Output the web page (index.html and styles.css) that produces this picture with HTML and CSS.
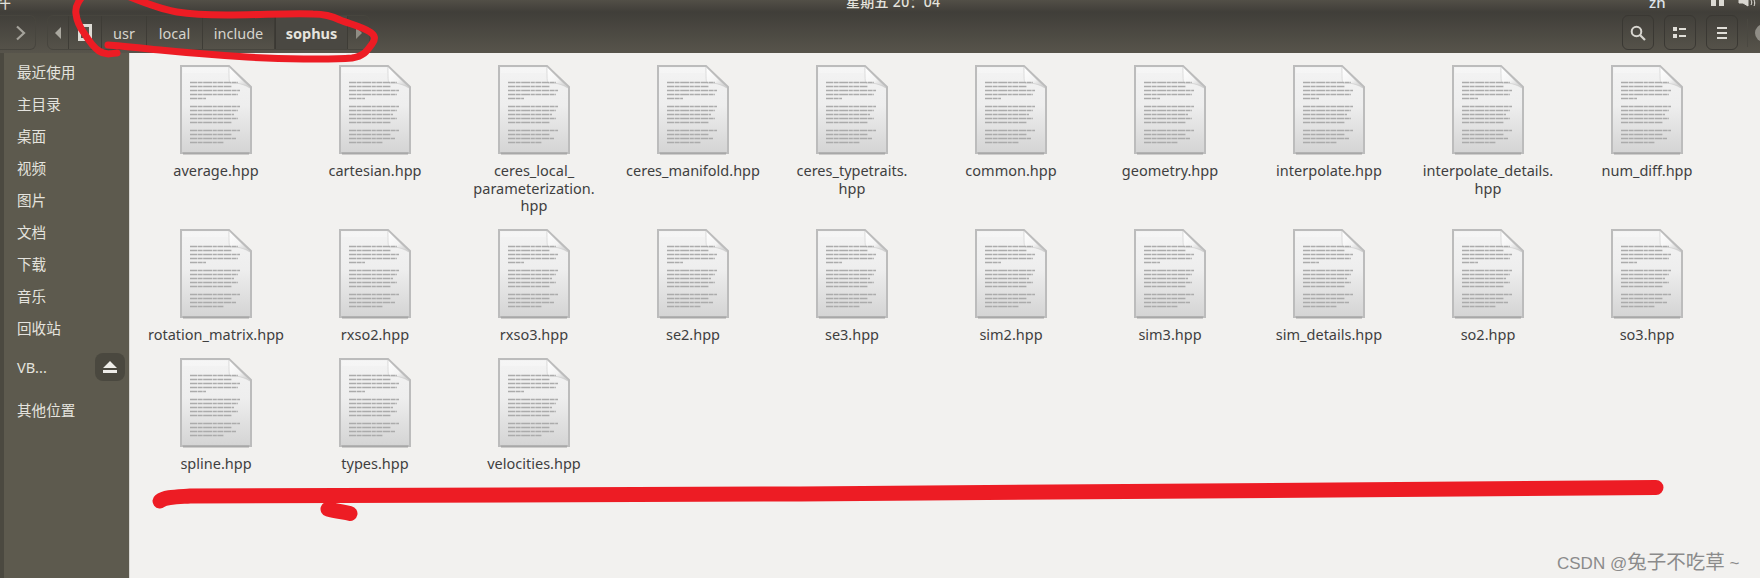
FILE: index.html
```html
<!DOCTYPE html>
<html lang="zh">
<head>
    <meta charset="UTF-8">
    <title>sophus</title>
    <link rel="stylesheet" href="styles.css">
</head>
<body>
    <svg class="defs" aria-hidden="true">
        <defs>
            <linearGradient id="paper" x1="0" y1="0" x2="0" y2="1">
                <stop offset="0" stop-color="#f3f3f3"/>
                <stop offset="0.45" stop-color="#eeeeee"/>
                <stop offset="1" stop-color="#d4d4d4"/>
            </linearGradient>
            <linearGradient id="curl" x1="0" y1="0" x2="1" y2="1">
                <stop offset="0" stop-color="#ffffff"/>
                <stop offset="0.55" stop-color="#f4f4f4"/>
                <stop offset="1" stop-color="#c4c4c4"/>
            </linearGradient>
            <symbol id="doc" viewBox="0 0 72 90">
                <path d="M1 1H49L71 22V88H1Z" fill="url(#paper)" stroke="#bcbcbc" stroke-width="2"/>
                <path d="M3 88.500H69" stroke="#a8a8a8" stroke-width="2"/>
                <path d="M3 3H48V8H3Z" fill="#f6f6f6" opacity="0.7"/>
                <path d="M49 2C49 12 49 17 50 18C53 18 60 17 70 23Z" fill="url(#curl)" stroke="#c9c9c9" stroke-width="0.6"/>
                <g class="doc-lines">
                    <path d="M10 17.500H58M10 21.500H52M10 25.500H60M10 29.500H58M10 33.500H26"/>
                    <path d="M10 41.500H60M10 45.500H58M10 49.500H54M10 53.500H58M10 57.500H52"/>
                    <path d="M10 65.500H60M10 69.500H52M10 73.500H56M10 77.500H44"/>
                </g>
            </symbol>
        </defs>
    </svg>

    <div class="panel">
        <span class="panel-left">件</span>
        <span class="panel-clock">星期五 20：04</span>
        <span class="panel-lang">zh</span>
        <span class="panel-net"><i></i><i></i></span>
        <svg class="panel-vol" width="20" height="8" viewBox="0 0 20 8"><path d="M1 0H5L10 0V6L5 3H1ZM13 0C14 2 14 3 13 5M16 0C17 2 17 4 16 6" fill="#d8d6d0" stroke="#d8d6d0"/></svg>
    </div>

    <header class="toolbar">
        <div class="nav-btn">
            <svg width="12" height="16" viewBox="0 0 12 16"><path d="M2 1.500L9 8L2 14.500" fill="none" stroke="#a5a39b" stroke-width="2.200"/></svg>
        </div>
        <div class="pathbar">
            <div class="seg seg-arrow"><svg width="7" height="12" viewBox="0 0 7 12"><path d="M6 0V12L0 6Z" fill="#aaa89f"/></svg></div>
            <div class="seg seg-home"><svg width="14" height="17" viewBox="0 0 14 17"><path d="M0 0H14V17H0Z" fill="#dedcd6"/><path d="M3 3H11V14H3Z" fill="#55534a"/><path d="M5 6L10 11V14H7L4 9Z" fill="#dedcd6"/></svg></div>
            <div class="seg seg-usr">usr</div>
            <div class="seg seg-local">local</div>
            <div class="seg seg-include">include</div>
            <div class="seg seg-sophus">sophus</div>
            <div class="seg seg-next"><svg width="7" height="12" viewBox="0 0 7 12"><path d="M1 0V12L7 6Z" fill="#8f8d84"/></svg></div>
        </div>
        <div class="tools">
            <div class="tool">
                <svg width="16" height="16" viewBox="0 0 16 16"><circle cx="6.500" cy="6.500" r="4.800" fill="none" stroke="#d8d6d0" stroke-width="2"/><path d="M10 10L15 15" stroke="#d8d6d0" stroke-width="2.200"/></svg>
            </div>
            <div class="tool">
                <svg width="14" height="12" viewBox="0 0 14 12"><path d="M0 0H4V4H0ZM0 7H4V11H0Z" fill="#e0ded8"/><path d="M6 1H13V3H6ZM6 8H13V10H6Z" fill="#e0ded8"/></svg>
            </div>
            <div class="tool">
                <svg width="12" height="12" viewBox="0 0 12 12"><path d="M1 0H11V2H1ZM1 5H11V7H1ZM1 10H11V12H1Z" fill="#e0ded8"/></svg>
            </div>
            <div class="tool-sep"></div>
            <div class="win-btn"></div>
        </div>
    </header>

    <main class="main">
        <nav class="sidebar">
            <div class="side-item">最近使用</div>
            <div class="side-item">主目录</div>
            <div class="side-item">桌面</div>
            <div class="side-item">视频</div>
            <div class="side-item">图片</div>
            <div class="side-item">文档</div>
            <div class="side-item">下载</div>
            <div class="side-item">音乐</div>
            <div class="side-item">回收站</div>
            <div class="side-item side-mount">
                <span>VB...</span>
                <span class="eject"><svg width="14" height="12" viewBox="0 0 14 12"><path d="M7 0L14 7H0ZM0 9H14V12H0Z" fill="#eeede9"/></svg></span>
            </div>
            <div class="side-item side-other">其他位置</div>
        </nav>

        <section class="files">
            <div class="file"><svg class="doc"><use href="#doc"/></svg><div class="name">average.hpp</div></div>
            <div class="file"><svg class="doc"><use href="#doc"/></svg><div class="name">cartesian.hpp</div></div>
            <div class="file"><svg class="doc"><use href="#doc"/></svg><div class="name">ceres_local_<br>parameterization.<br>hpp</div></div>
            <div class="file"><svg class="doc"><use href="#doc"/></svg><div class="name">ceres_manifold.hpp</div></div>
            <div class="file"><svg class="doc"><use href="#doc"/></svg><div class="name">ceres_typetraits.<br>hpp</div></div>
            <div class="file"><svg class="doc"><use href="#doc"/></svg><div class="name">common.hpp</div></div>
            <div class="file"><svg class="doc"><use href="#doc"/></svg><div class="name">geometry.hpp</div></div>
            <div class="file"><svg class="doc"><use href="#doc"/></svg><div class="name">interpolate.hpp</div></div>
            <div class="file"><svg class="doc"><use href="#doc"/></svg><div class="name">interpolate_details.<br>hpp</div></div>
            <div class="file"><svg class="doc"><use href="#doc"/></svg><div class="name">num_diff.hpp</div></div>

            <div class="file"><svg class="doc"><use href="#doc"/></svg><div class="name">rotation_matrix.hpp</div></div>
            <div class="file"><svg class="doc"><use href="#doc"/></svg><div class="name">rxso2.hpp</div></div>
            <div class="file"><svg class="doc"><use href="#doc"/></svg><div class="name">rxso3.hpp</div></div>
            <div class="file"><svg class="doc"><use href="#doc"/></svg><div class="name">se2.hpp</div></div>
            <div class="file"><svg class="doc"><use href="#doc"/></svg><div class="name">se3.hpp</div></div>
            <div class="file"><svg class="doc"><use href="#doc"/></svg><div class="name">sim2.hpp</div></div>
            <div class="file"><svg class="doc"><use href="#doc"/></svg><div class="name">sim3.hpp</div></div>
            <div class="file"><svg class="doc"><use href="#doc"/></svg><div class="name">sim_details.hpp</div></div>
            <div class="file"><svg class="doc"><use href="#doc"/></svg><div class="name">so2.hpp</div></div>
            <div class="file"><svg class="doc"><use href="#doc"/></svg><div class="name">so3.hpp</div></div>

            <div class="file"><svg class="doc"><use href="#doc"/></svg><div class="name">spline.hpp</div></div>
            <div class="file"><svg class="doc"><use href="#doc"/></svg><div class="name">types.hpp</div></div>
            <div class="file"><svg class="doc"><use href="#doc"/></svg><div class="name">velocities.hpp</div></div>
        </section>
    </main>

    <div class="watermark">CSDN @<span class="watermark-cjk">兔子不吃草</span> ~</div>

    <svg class="marks" width="1760" height="578" viewBox="0 0 1760 578">
        <path class="mark-thin" d="M130 -3C145 3 160 9 177 12C195 15 210 15 227 15C260 15 290 13 313 14C325 14 332 16 340 20C350 24 363 27 370 32C375 35 376 39 372 44C367 51 364 56 352 58C330 60 280 59 247 57C215 55 190 53 160 50C140 48 122 46 108 45"/>
        <path class="mark-thin" d="M82 -3C77 3 75 8 76 14C77 22 79 26 84 33C89 41 93 47 99 51C105 55 110 54 117 53"/>
        <path class="mark-wide" d="M160 501C165 497 175 497 190 496C300 495 500 495 800 494C1100 492 1400 489 1656 487.500"/>
        <path class="mark-wide" d="M328 509C335 511 343 512 350 513.500"/>
    </svg>
</body>
</html>
```

FILE: styles.css
```css
html, body {
    margin: 0;
    height: 100%;
}

body {
    position: relative;
    display: flex;
    flex-direction: column;
    overflow: hidden;
    background-color: #f2f1ef;
    font-family: "Noto Sans", "Noto Sans CJK SC", sans-serif;
}

.defs {
    display: block;
    flex: none;
    width: 0;
    height: 0;
}

.doc-lines path {
    fill: none;
    stroke: #ababab;
    stroke-width: 1.300;
    stroke-dasharray: 7 0.6 5 0.6 9 0.6 4 0.6 6 0.6;
}

/* top panel, cut off by the screenshot */
.panel {
    flex: none;
    display: flex;
    align-items: flex-end;
    height: 12px;
    overflow: hidden;
    background: linear-gradient(#524f47, #403e39);
    color: #e4e2dc;
}

.panel span {
    line-height: 14px;
    margin-bottom: 3px;
    white-space: nowrap;
}

.panel-left {
    width: 851px;
    margin-left: -5px;
    font-size: 16px;
}

.panel-clock {
    width: 803px;
    font-size: 14px;
    font-weight: 500;
    letter-spacing: 0.3px;
}

.panel-lang {
    width: 62px;
    font-size: 15px;
    font-weight: 500;
    color: #dfe4ea;
}

.panel .panel-net {
    display: flex;
    gap: 3px;
    width: 27px;
    height: 9px;
    margin-bottom: 3px;
}

.panel-net i {
    width: 5px;
    height: 6px;
    background-color: #dcdad4;
}

.panel-vol {
    margin-bottom: 4px;
}

/* header bar */
.toolbar {
    flex: none;
    display: flex;
    align-items: center;
    height: 41px;
    background: linear-gradient(#403e39, #57544b);
}

.nav-btn {
    display: flex;
    align-items: center;
    justify-content: center;
    box-sizing: border-box;
    width: 37px;
    height: 35px;
    margin-left: -1px;
    padding-left: 6px;
    border: 1px solid #47453e;
    border-left: 1px solid #3c3a35;
    border-radius: 0 6px 6px 0;
    box-shadow: -4px 0 0 -3px #3c3a35;
}

.pathbar {
    display: flex;
    height: 35px;
    margin-left: 11px;
    box-sizing: border-box;
    border: 1px solid #47453e;
    border-radius: 6px;
    color: #d6d4cd;
    font-size: 14.500px;
}

.seg {
    display: flex;
    align-items: center;
    justify-content: center;
    box-sizing: border-box;
    border-right: 1px solid #3e3c36;
}

.seg-arrow { width: 21px; }
.seg-home { width: 33px; }
.seg-usr { width: 45px; }
.seg-local { width: 56px; }
.seg-include { width: 72px; }

.seg-sophus {
    width: 73px;
    font-weight: 700;
    color: #e6e4de;
    background-color: #4a4842;
    border-left: 1px solid #3a3833;
}

.seg-next {
    width: 21px;
    border-right: none;
}

.tools {
    display: flex;
    align-items: center;
    margin-left: auto;
    overflow: hidden;
    width: 138px;
}

.tool {
    flex: none;
    display: flex;
    align-items: center;
    justify-content: center;
    box-sizing: border-box;
    width: 32px;
    height: 35px;
    margin-right: 10px;
    border: 1px solid #3a3833;
    border-radius: 6px;
}

.tool-sep {
    flex: none;
    width: 1px;
    height: 28px;
    margin-left: -1px;
    background-color: #4a4841;
}

.win-btn {
    flex: none;
    width: 18px;
    height: 18px;
    margin-left: 7px;
    border-radius: 50%;
    background-color: #8f8d86;
}

/* body of the window */
.main {
    flex: 1;
    display: flex;
    min-height: 0;
}

.sidebar {
    flex: none;
    box-sizing: border-box;
    width: 130px;
    padding-top: 2px;
    background-color: #5d5a4e;
    border-left: 4px solid #4b4940;
    border-right: 1px solid #d9d8d4;
    color: #e4e3de;
    font-size: 14.600px;
}

.side-item {
    display: flex;
    align-items: center;
    height: 32px;
    padding-left: 13px;
}

.side-mount {
    justify-content: space-between;
    height: 40px;
    margin-top: 4px;
    padding-right: 4px;
}

.side-other {
    margin-top: 6px;
}

.eject {
    display: flex;
    align-items: center;
    justify-content: center;
    width: 30px;
    height: 28px;
    border-radius: 8px;
    background-color: #4a483f;
}

.files {
    flex: 1;
    display: grid;
    grid-template-columns: repeat(10, 159px);
    grid-auto-rows: min-content;
    row-gap: 14.500px;
    padding: 12px 0 0 6.500px;
}

.file {
    display: flex;
    flex-direction: column;
    align-items: center;
}

.doc {
    display: block;
    width: 72px;
    height: 90px;
}

.name {
    margin-top: 7px;
    color: #3f3f3f;
    font-size: 14.500px;
    line-height: 17.500px;
    text-align: center;
    white-space: nowrap;
}

/* things drawn on top of the screenshot */
.marks {
    position: absolute;
    top: 0;
    left: 0;
    pointer-events: none;
}

.mark-thin,
.mark-wide {
    fill: none;
    stroke: #ed1c24;
    stroke-linecap: round;
    stroke-linejoin: round;
}

.mark-thin {
    stroke-width: 7;
}

.mark-wide {
    stroke-width: 15;
}

.watermark {
    position: absolute;
    top: 546px;
    left: 1557px;
    color: #8b8b8b;
    font-family: "Liberation Sans", "Noto Sans CJK SC", sans-serif;
    font-size: 17px;
    white-space: nowrap;
}

.watermark-cjk {
    font-size: 19.500px;
}
```
